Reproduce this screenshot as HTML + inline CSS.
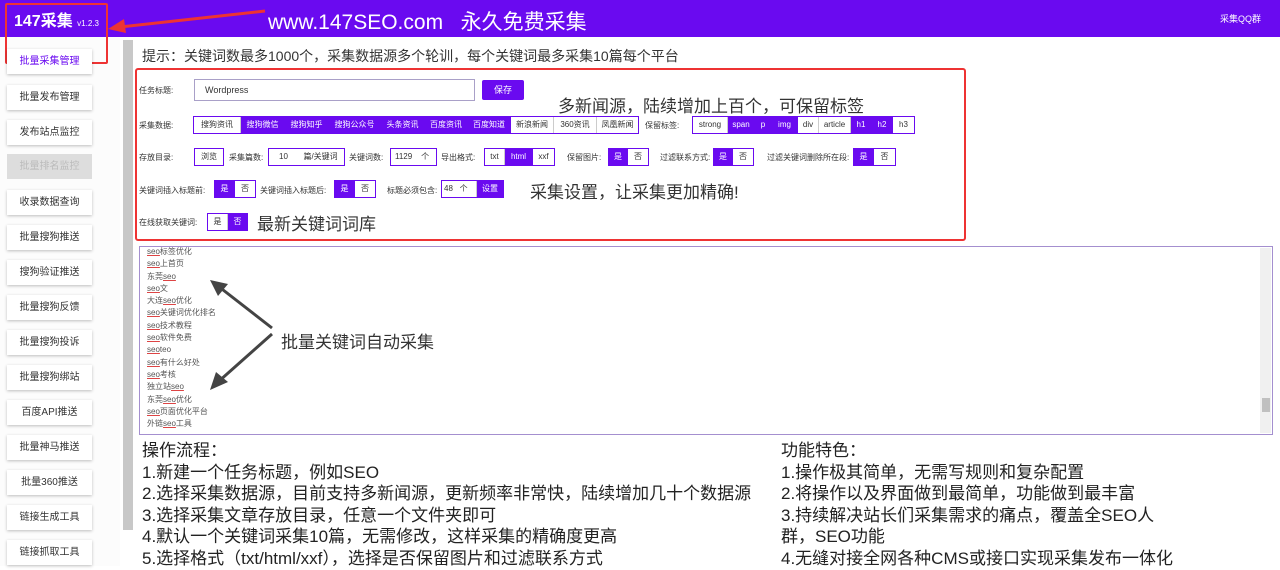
<!DOCTYPE html>
<html><head><meta charset="utf-8">
<style>
*{margin:0;padding:0;box-sizing:border-box}
body{width:1280px;height:566px;overflow:hidden;background:#fff;font-family:"Liberation Sans","Noto Sans CJK SC",sans-serif;color:#333;position:relative}
.a{position:absolute;white-space:nowrap}
.hdr{left:0;top:0;width:1280px;height:37px;background:#6a0af0}
.side{left:0;top:37px;width:120px;height:529px;background:#fcfcfc}
.sb{position:absolute;left:7px;width:85px;height:25px;background:#fff;box-shadow:0 1px 3px rgba(0,0,0,.25);font-size:10px;text-align:center;line-height:25px;color:#333}
.lbl{font-size:8px;color:#333}
.g{position:absolute;display:flex;border:1px solid #6a0af0;height:18px;font-size:8px;white-space:nowrap}
.g span{display:block;line-height:16px;text-align:center;color:#333;border-right:1px solid #ccc;padding:0;white-space:nowrap;overflow:hidden}
.g span.p{background:#6a0af0;color:#fff;border-right-color:#6a0af0}
.g span:last-child{border-right:none}
.kw{font-size:8px;color:#555;line-height:12.3px}
.kw u{text-decoration-color:#d44}
.txt{font-size:17px;line-height:21.6px;color:#222}
</style></head><body>
<div class="a hdr"></div>
<div class="a" style="left:14px;top:7px;color:#fff;font-size:16px;font-weight:bold">147采集 <span style="font-size:8px;font-weight:normal">v1.2.3</span></div>
<div class="a" style="left:268px;top:6px;color:#fff;font-size:21px">www.147SEO.com&nbsp;&nbsp;&nbsp;永久免费采集</div>
<div class="a" style="left:1220px;top:12px;color:#fff;font-size:9px">采集QQ群</div>
<svg class="a" style="left:100px;top:5px" width="170" height="35"><line x1="165" y1="6" x2="20" y2="22" stroke="#e33" stroke-width="3"/><polygon points="8,24 24,14 26,28" fill="#e33"/></svg>
<div class="a side"></div>
<div class="a" style="left:5px;top:3px;width:103px;height:61px;border:2px solid #e33;border-radius:2px"></div>
<div class="sb" style="top:49px;color:#6a0af0">批量采集管理</div>
<div class="sb" style="top:85px">批量发布管理</div>
<div class="sb" style="top:120px">发布站点监控</div>
<div class="sb" style="top:154px;background:#ddd;color:#bbb;box-shadow:none">批量排名监控</div>
<div class="sb" style="top:190px">收录数据查询</div>
<div class="sb" style="top:225px">批量搜狗推送</div>
<div class="sb" style="top:260px">搜狗验证推送</div>
<div class="sb" style="top:295px">批量搜狗反馈</div>
<div class="sb" style="top:330px">批量搜狗投诉</div>
<div class="sb" style="top:365px">批量搜狗绑站</div>
<div class="sb" style="top:400px">百度API推送</div>
<div class="sb" style="top:435px">批量神马推送</div>
<div class="sb" style="top:470px">批量360推送</div>
<div class="sb" style="top:505px">链接生成工具</div>
<div class="sb" style="top:540px">链接抓取工具</div>
<div class="a" style="left:123px;top:40px;width:10px;height:490px;background:#c8c8c8"></div>
<div class="a" style="left:142px;top:46px;font-size:14px;color:#333">提示：关键词数最多1000个，采集数据源多个轮训，每个关键词最多采集10篇每个平台</div>
<div class="a" style="left:135px;top:68px;width:831px;height:173px;border:2px solid #e33;border-radius:3px"></div>
<div class="a lbl" style="left:139px;top:85px">任务标题:</div>
<div class="a" style="left:194px;top:79px;width:281px;height:22px;border:1px solid #a9a0c8;font-size:9px;padding:5px 10px">Wordpress</div>
<div class="a" style="left:482px;top:80px;width:42px;height:20px;background:#6a0af0;color:#fff;font-size:9px;text-align:center;line-height:20px;border-radius:2px">保存</div>
<div class="a" style="left:558px;top:92px;font-size:17px">多新闻源，陆续增加上百个，可保留标签</div>
<div class="a lbl" style="left:139px;top:120px">采集数据:</div>
<div class="g" style="left:193px;top:116px"><span style="width:47px">搜狗资讯</span><span class="p" style="width:44px">搜狗微信</span><span class="p" style="width:44px">搜狗知乎</span><span class="p" style="width:52px">搜狗公众号</span><span class="p" style="width:44px">头条资讯</span><span class="p" style="width:43px">百度资讯</span><span class="p" style="width:43px">百度知道</span><span style="width:43px">新浪新闻</span><span style="width:43px">360资讯</span><span style="width:41px">凤凰新闻</span></div>
<div class="a lbl" style="left:645px;top:120px">保留标签:</div>
<div class="g" style="left:692px;top:116px"><span style="width:35px">strong</span><span class="p" style="width:27px">span</span><span class="p" style="width:17px">p</span><span class="p" style="width:26px">img</span><span style="width:21px">div</span><span style="width:32px">article</span><span class="p" style="width:21px">h1</span><span class="p" style="width:21px">h2</span><span style="width:21px">h3</span></div>
<div class="a lbl" style="left:139px;top:152px">存放目录:</div>
<div class="g" style="left:194px;top:148px"><span style="width:28px">浏览</span></div>
<div class="a lbl" style="left:229px;top:152px">采集篇数:</div>
<div class="g" style="left:268px;top:148px;width:77px"><span style="text-align:left;padding-left:10px;width:77px">10&nbsp;&nbsp;&nbsp;&nbsp;&nbsp;&nbsp;&nbsp;篇/关键词</span></div>
<div class="a lbl" style="left:349px;top:152px">关键词数:</div>
<div class="g" style="left:390px;top:148px;width:47px"><span style="width:47px;text-align:left;padding-left:4px">1129&nbsp;&nbsp;&nbsp;&nbsp;个</span></div>
<div class="a lbl" style="left:441px;top:152px">导出格式:</div>
<div class="g" style="left:484px;top:148px"><span style="width:20px">txt</span><span class="p" style="width:28px">html</span><span style="width:21px">xxf</span></div>
<div class="a lbl" style="left:567px;top:152px">保留图片:</div>
<div class="g" style="left:608px;top:148px"><span class="p" style="width:19px">是</span><span style="width:20px">否</span></div>
<div class="a lbl" style="left:660px;top:152px">过滤联系方式:</div>
<div class="g" style="left:713px;top:148px"><span class="p" style="width:19px">是</span><span style="width:20px">否</span></div>
<div class="a lbl" style="left:767px;top:152px">过滤关键词删除所在段:</div>
<div class="g" style="left:853px;top:148px"><span class="p" style="width:20px">是</span><span style="width:21px">否</span></div>
<div class="a lbl" style="left:139px;top:185px">关键词插入标题前:</div>
<div class="g" style="left:214px;top:180px"><span class="p" style="width:20px">是</span><span style="width:20px">否</span></div>
<div class="a lbl" style="left:260px;top:185px">关键词插入标题后:</div>
<div class="g" style="left:334px;top:180px"><span class="p" style="width:20px">是</span><span style="width:20px">否</span></div>
<div class="a lbl" style="left:387px;top:185px">标题必须包含:</div>
<div class="g" style="left:441px;top:180px"><span style="width:35px;text-align:left;padding-left:2px">48&nbsp;&nbsp;&nbsp;个</span><span class="p" style="width:26px">设置</span></div>
<div class="a" style="left:530px;top:178px;font-size:17px">采集设置，让采集更加精确!</div>
<div class="a lbl" style="left:139px;top:217px">在线获取关键词:</div>
<div class="g" style="left:207px;top:213px"><span style="width:20px">是</span><span class="p" style="width:19px">否</span></div>
<div class="a" style="left:257px;top:210px;font-size:17px">最新关键词词库</div>
<div class="a" style="left:139px;top:246px;width:1134px;height:189px;border:1px solid #a48fcf"></div>
<div class="a" style="left:1260px;top:248px;width:11px;height:185px;background:#f0f0f0"></div>
<div class="a" style="left:1262px;top:398px;width:8px;height:14px;background:#c0c0c0"></div>
<div class="a kw" style="left:147px;top:246px"><u>seo</u>标签优化<br><u>seo</u>上首页<br>东莞<u>seo</u><br><u>seo</u>文<br>大连<u>seo</u>优化<br><u>seo</u>关键词优化排名<br><u>seo</u>技术教程<br><u>seo</u>软件免费<br><u>seo</u>teo<br><u>seo</u>有什么好处<br><u>seo</u>考核<br>独立站<u>seo</u><br>东莞<u>seo</u>优化<br><u>seo</u>页面优化平台<br>外链<u>seo</u>工具</div>
<svg class="a" style="left:200px;top:270px" width="80" height="130"><line x1="72" y1="58" x2="18" y2="16" stroke="#444" stroke-width="3"/><polygon points="10,10 28,14 18,26" fill="#444"/><line x1="72" y1="64" x2="18" y2="112" stroke="#444" stroke-width="3"/><polygon points="10,120 16,102 28,112" fill="#444"/></svg>
<div class="a" style="left:281px;top:328px;font-size:17px">批量关键词自动采集</div>
<div class="a txt" style="left:142px;top:440px">操作流程：<br>1.新建一个任务标题，例如SEO<br>2.选择采集数据源，目前支持多新闻源，更新频率非常快，陆续增加几十个数据源<br>3.选择采集文章存放目录，任意一个文件夹即可<br>4.默认一个关键词采集10篇，无需修改，这样采集的精确度更高<br>5.选择格式（txt/html/xxf），选择是否保留图片和过滤联系方式</div>
<div class="a txt" style="left:781px;top:440px">功能特色：<br>1.操作极其简单，无需写规则和复杂配置<br>2.将操作以及界面做到最简单，功能做到最丰富<br>3.持续解决站长们采集需求的痛点，覆盖全SEO人<br>群，SEO功能<br>4.无缝对接全网各种CMS或接口实现采集发布一体化</div>
</body></html>
